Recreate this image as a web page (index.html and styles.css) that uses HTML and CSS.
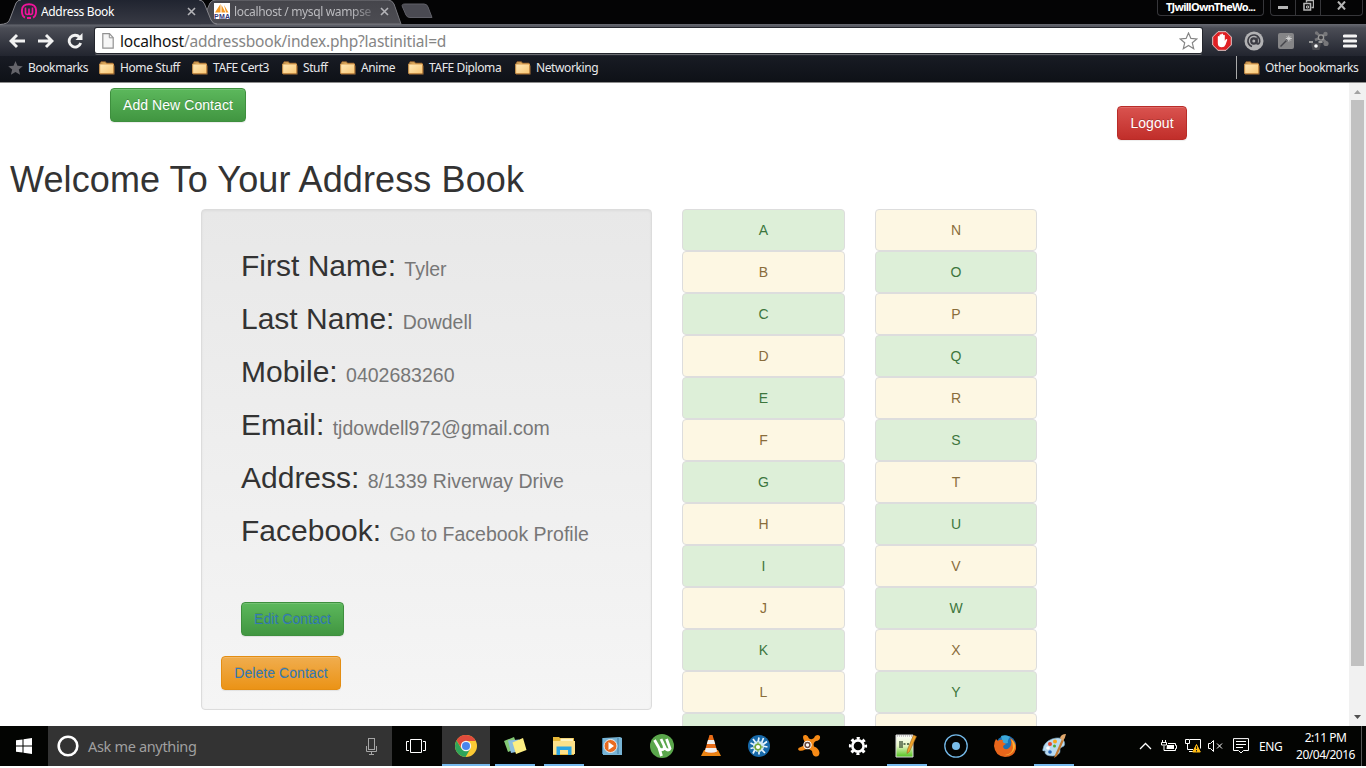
FILE: index.html
```html
<!DOCTYPE html>
<html lang="en">
<head>
<meta charset="utf-8">
<title>Address Book</title>
<link rel="stylesheet" href="styles.css">
</head>
<body>
<svg class="defs" width="0" height="0">
  <defs>
    <linearGradient id="gf" x1="0" y1="0" x2="1" y2="1"><stop offset="0" stop-color="#ffe9ba"/><stop offset="1" stop-color="#f9c774"/></linearGradient>
    <linearGradient id="gt" x1="0" y1="0" x2="0" y2="1"><stop offset="0" stop-color="#202430"/><stop offset="1" stop-color="#383a44"/></linearGradient>
    <linearGradient id="gi" x1="0" y1="0" x2="0" y2="1"><stop offset="0" stop-color="#45454b"/><stop offset="1" stop-color="#4c4c52"/></linearGradient>
    <linearGradient id="gg" x1="0" y1="0" x2="0" y2="1"><stop offset="0" stop-color="#fff"/><stop offset=".5" stop-color="#e5f6c0"/><stop offset="1" stop-color="#4fc21c"/></linearGradient>
    <symbol id="folder" viewBox="0 0 16 14"><path d="M1 2.500L2 .8h4.500l1 1.400h6.500v2" fill="#e5b363" stroke="#8a5b2d"/><path d="M.7 3h13.800v9.500H.7z" fill="url(#gf)" stroke="#d79a4d"/><path d="M1 13.300h14.300V4.500" fill="none" stroke="#74512f"/></symbol>
    <symbol id="close" viewBox="0 0 9 9"><path d="M1 1l7 7M8 1l-7 7" stroke="#b4b4b8" stroke-width="1.600"/></symbol>
  </defs>
</svg>

<header class="browser">
  <div class="tabstrip">
    <svg class="tabshapes" width="440" height="25" viewBox="0 0 440 25">
      <path d="M201 24L210 3Q212 0 216 0H388Q392 0 394 4L401 24z" fill="url(#gi)" stroke="#77777d"/>
      <path d="M402.500 7Q401 4 405 4H424Q427 4 428 7L432 17.500H410Q407 17.500 406 15z" fill="#4a4a52" stroke="#606068"/>
      <path d="M0 24.500Q8 24 9.500 20L16 3Q17.500 0 21 0H199Q203 0 204.500 4L211 20Q213 24.500 217 24.500z" fill="url(#gt)"/>
      <path d="M0 24.500Q8 24 9.500 20L16 3Q17.500 0 21 0M199 0Q203 0 204.500 4L211 20Q213 24 217 24" fill="none" stroke="#85858b"/>
    </svg>
    <div class="tab tab-active">
      <svg width="16" height="16" viewBox="0 0 16 16"><path d="M4 14.500Q.9 13.500.9 8q0-6.800 7.100-6.800T15.100 8q0 5.500-3.100 6.500M6 15h4" fill="none" stroke="#f0149a" stroke-width="1.900"/><path d="M4.500 4.500v5q0 2 1.700 2 1.800 0 1.800-2v-4 4q0 2 1.800 2 1.700 0 1.700-2v-5" fill="none" stroke="#f0149a" stroke-width="1.600"/></svg>
      <span class="tab-title">Address Book</span>
      <svg class="tab-x" width="9" height="9"><use href="#close"/></svg>
    </div>
    <div class="tab tab-idle">
      <svg width="16" height="16" viewBox="0 0 16 16"><path fill="#fff" d="M0 0h16v16H0z"/><path d="M1 9.500L6.500 1v8.500zM7.500 9.500V2l4 7.500zM10 2l4.500 7.500H12z" fill="#f49a24"/><text x="0" y="15.500" class="pma" textLength="16">PMA</text></svg>
      <span class="tab-title">localhost / mysql wampse</span>
      <svg class="tab-x" width="9" height="9"><use href="#close"/></svg>
    </div>
    <div class="user">TJwillOwnTheWo...</div>
    <div class="winctl">
      <span><svg width="10" height="10"><path fill="#b5b5b5" d="M0 5h10v3H0z"/></svg></span>
      <span><svg width="11" height="11" viewBox="0 0 11 11" fill="none" stroke="#b5b5b5"><path d="M3.500 2.500v-2h7v7h-2" stroke-width="1.400"/><path d="M1 3.500h6.500V10H1z" stroke-width="1.600"/><path d="M3.500 6h2v2h-2z"/></svg></span>
      <span><svg width="9" height="9" viewBox="0 0 9 9"><path d="M1 .5l7 8M8 .5l-7 8" stroke="#b5b5b5" stroke-width="2"/></svg></span>
    </div>
  </div>

  <div class="toolbar">
    <svg class="nav" width="16" height="16" viewBox="0 0 16 16"><path d="M8 2L2 8l6 6M2.500 8H16" fill="none" stroke="#f2f2f2" stroke-width="2.900"/></svg>
    <svg class="nav" width="16" height="16" viewBox="0 0 16 16"><path d="M8 2l6 6-6 6M13.500 8H0" fill="none" stroke="#f2f2f2" stroke-width="2.900"/></svg>
    <svg class="nav" width="16" height="16" viewBox="0 0 16 16"><path d="M12.500 4.200A5.900 5.900 0 1 0 13.700 10" fill="none" stroke="#f2f2f2" stroke-width="2.800"/><path d="M15.500 0v7H8.500z" fill="#f2f2f2"/></svg>
    <div class="omnibox">
      <svg width="12" height="16" viewBox="0 0 12 16"><path d="M.8.700h6.700l3.700 4v10.500H.8z" fill="#f6f6f6" stroke="#929292" stroke-width="1.200"/><path d="M7.300.8v4h4" fill="none" stroke="#929292"/></svg>
      <span class="url"><b>localhost</b>/addressbook/index.php?lastinitial=d</span>
      <svg class="star" width="19" height="18" viewBox="0 0 19 18"><path d="M9.500 1l2.400 5.400 5.900.5-4.500 3.900 1.400 5.900-5.200-3.200-5.200 3.200 1.400-5.900L1.200 6.900l5.900-.5z" fill="#fff" stroke="#858585" stroke-width="1.200"/></svg>
    </div>
    <div class="exts">
      <svg width="20" height="20" viewBox="0 0 20 20"><path d="M6 .7h8L19.300 6v8L14 19.300H6L.7 14V6z" fill="#df2024" stroke="#e5c9c9"/><path d="M5.800 11V5.500q.8-1 1.700 0V4q.9-1.200 1.800-.2V3q.9-1 1.800 0v1.200q.9-1 1.700 0V10l1-1.800q1.200-.7 1.500.5l-1.800 5q-1 2.600-3.700 2.600-4 0-4-4.300z" fill="#fff"/></svg>
      <svg width="20" height="20" viewBox="0 0 20 20"><circle cx="10" cy="10" r="9.500" fill="#b2b2b4"/><circle cx="9.800" cy="10" r="2.600" fill="none" stroke="#3b3b43" stroke-width="2.200"/><path d="M13 6.500v6.300q2.200.7 2.700-2.300A5.900 5.900 0 1 0 8 15.500" fill="none" stroke="#3b3b43" stroke-width="1.600"/></svg>
      <svg class="e-wand" width="16" height="16" viewBox="0 0 16 16"><rect width="16" height="16" rx="2" fill="#858587"/><path d="M2.500 13.500l7-7" stroke="#45454a" stroke-width="1.500"/><path d="M10.800 2.500v6M7.800 5.500h6M8.800 3.500l4 4M12.800 3.500l-4 4" stroke="#d7d7d7" stroke-width=".9"/></svg>
      <svg class="e-hub" width="20" height="20" viewBox="0 0 20 20"><path d="M12 6.500L8 2M12 6.500l5-4M12 6.500l5.500 5.500M12 6.500L6 9" stroke="#77777a" stroke-width="2.600"/><circle cx="16.500" cy="3" r="2.200" fill="#77777a"/><circle cx="17" cy="12.500" r="2.600" fill="#77777a"/><circle cx="7.500" cy="2" r="1.700" fill="#77777a"/><circle cx="12" cy="6.500" r="2.600" fill="#3d3d43" stroke="#999" stroke-width="1.300"/><path d="M2 12h10l-1.500 7h-7z" fill="#4b4b50"/><circle cx="7" cy="15" r="1.800" fill="#fff"/><path d="M0 11h4M9.500 11h4" stroke="#999" stroke-width="1.800"/></svg>
      <svg class="e-menu" width="14" height="14" viewBox="0 0 14 14"><path d="M1.500 2h11M1.500 7h11M1.500 12h11" stroke="#f4f4f4" stroke-width="3.200" stroke-linecap="round"/></svg>
    </div>
  </div>

  <nav class="bookmarks">
    <span class="bm b0"><svg width="15" height="14" viewBox="0 0 15 14"><path d="M7.500 0l2 4.800 5.300.4-4 3.400 1.300 5.200-4.600-2.900-4.600 2.900 1.300-5.200-4-3.400 5.300-.4z" fill="#64646a"/></svg>Bookmarks</span>
    <span class="bm b1"><svg width="16" height="14"><use href="#folder"/></svg>Home Stuff</span>
    <span class="bm b2"><svg width="16" height="14"><use href="#folder"/></svg>TAFE Cert3</span>
    <span class="bm b3"><svg width="16" height="14"><use href="#folder"/></svg>Stuff</span>
    <span class="bm b4"><svg width="16" height="14"><use href="#folder"/></svg>Anime</span>
    <span class="bm b5"><svg width="16" height="14"><use href="#folder"/></svg>TAFE Diploma</span>
    <span class="bm b6"><svg width="16" height="14"><use href="#folder"/></svg>Networking</span>
    <span class="bm other"><svg width="16" height="14"><use href="#folder"/></svg>Other bookmarks</span>
  </nav>
</header>

<main class="page">
  <div class="content">
    <div class="actions">
      <button class="btn btn-success add">Add New Contact</button>
      <button class="btn btn-danger">Logout</button>
    </div>
    <h1>Welcome To Your Address Book</h1>
    <div class="row">
      <section class="well">
        <h2>First Name: <small>Tyler</small></h2>
        <h2>Last Name: <small>Dowdell</small></h2>
        <h2>Mobile: <small>0402683260</small></h2>
        <h2>Email: <small>tjdowdell972@gmail.com</small></h2>
        <h2>Address: <small>8/1339 Riverway Drive</small></h2>
        <h2>Facebook: <small>Go to Facebook Profile</small></h2>
        <button class="btn btn-success edit">Edit Contact</button>
        <button class="btn btn-warning delete">Delete Contact</button>
      </section>
      <ul class="letters first">
        <li>A</li><li>B</li><li>C</li><li>D</li><li>E</li><li>F</li><li>G</li><li>H</li><li>I</li><li>J</li><li>K</li><li>L</li><li></li>
      </ul>
      <ul class="letters second">
        <li>N</li><li>O</li><li>P</li><li>Q</li><li>R</li><li>S</li><li>T</li><li>U</li><li>V</li><li>W</li><li>X</li><li>Y</li><li></li>
      </ul>
    </div>
  </div>
  <div class="scrollbar">
    <svg width="17" height="17"><path d="M5 11h7L8.500 7z" fill="#a3a3a3"/></svg>
    <div class="thumb"></div>
    <svg class="down" width="17" height="17"><path d="M5 6h7l-3.500 4z" fill="#505050"/></svg>
  </div>
</main>

<footer class="taskbar">
  <div class="start"><svg width="16" height="16" viewBox="0 0 16 16" fill="#fff"><path d="M0 2.300l6.500-.9v6.100H0zM7.500 1.200L16 0v7.500H7.500zM0 8.500h6.500v6.100L0 13.700zM7.500 8.500H16V16l-8.500-1.200z"/></svg></div>
  <div class="search">
    <svg width="22" height="22"><circle cx="11" cy="11" r="9.300" fill="none" stroke="#fff" stroke-width="2.600"/></svg>
    <span>Ask me anything</span>
    <svg class="mic" width="11" height="17" viewBox="0 0 11 17" fill="none" stroke="#a5a5a5"><rect x="2.500" y=".5" width="6" height="11"/><path d="M.5 8v5.500h10V8M5.500 13.500v3M3 16.500h5"/></svg>
  </div>
  <div class="taskview"><svg width="20" height="15" viewBox="0 0 20 15" fill="none" stroke="#fff"><path d="M4.500.5h11v13h-11zM3 2.500H.5v9H3M17 2.500h2.500v9H17"/></svg></div>
  <div class="apps">
    <div class="app current"><svg width="22" height="22" viewBox="0 0 22 22"><circle cx="11" cy="11" r="11" fill="#fbc934"/><path d="M1.500 5.500a11 11 0 0 1 19.200 0.500H11L6.600 13.500z" fill="#df4b3c"/><path d="M1.500 5.500a11 11 0 0 0 9 16.500l5-8.500H6.300z" fill="#2fa45a"/><circle cx="11" cy="11" r="5.200" fill="#f5f5f5"/><circle cx="11" cy="11" r="4" fill="#4a86ee"/></svg></div>
    <div class="app open"><svg width="24" height="20" viewBox="0 0 24 20"><path d="M1 5l10-4 4 11-10 4z" fill="#84c875"/><path d="M5 4.500l11-1 2 11.500-10 2z" fill="#8bbdde"/><path d="M9.500 6.500l10.500-4.500 3.500 12-10.500 4z" fill="#fdef83"/></svg></div>
    <div class="app open"><svg width="22" height="20" viewBox="0 0 22 20"><path d="M0 1h6l1 1h14v17H0z" fill="#e8b938"/><path d="M7.500 2.500H20V5H7.500z" fill="#fff3c2"/><path d="M0 5h22v13H0z" fill="#fde18a"/><path d="M3.500 19v-8.500h15V19H15v-5H7v5z" fill="#2ca5e3"/></svg></div>
    <div class="app media"><svg width="20" height="20" viewBox="0 0 20 20"><path d="M1 2l17-1 2 1v17H1z" fill="#78b4d5"/><path d="M16 2v16M.5 2v16" stroke="#3f7da5"/><circle cx="8.500" cy="10" r="6.500" fill="#e96b20" stroke="#e4edf5"/><path d="M6.500 6v8l5.500-4z" fill="#fff"/></svg></div>
    <div class="app"><svg width="24" height="24" viewBox="0 0 24 24"><circle cx="12" cy="12" r="12" fill="#5aa64b"/><path d="M4.500 6l4 7q1.500 3.500 4.500 2.500 2-1 1-4L11 5M14 11.500q1.500 4.500 4 4.500 1.500 0 2-1.500L16.500 5M9 14l2.500 8" fill="none" stroke="#fff" stroke-width="2.800"/></svg></div>
    <div class="app"><svg width="20" height="24" viewBox="0 0 20 24"><path d="M3 16h14l3 6H0z" fill="#ec8512"/><path d="M8.500 1h3l5 17q-6 3-13 0z" fill="#e86d18"/><path d="M7 6h6l1.200 4H5.800zM4.800 14h10.400l1 3.500q-6 2.500-12.400 0z" fill="#f0f0f0"/></svg></div>
    <div class="app media"><svg width="22" height="22" viewBox="0 0 22 22"><circle cx="11" cy="11" r="11" fill="#1769a9"/><path d="M11 2.500l-1 5M15.500 3l-2 5M19 6.500l-4 3M19.500 12l-5-1M17 18l-4-4M11 19.500V15M5 18.500l2-4M2.500 13.500l4-1M2.500 8l4 2M5 4l3 4" stroke="#eaf6ff" stroke-width="1.700"/><circle cx="10.500" cy="11.500" r="5.500" fill="#cfe8f6"/><circle cx="10" cy="12" r="2.800" fill="#fff" stroke="#75a83a" stroke-width="1.500"/><path d="M10 7v2.500M10 14.500V17M5 12h2.500M12.500 12H15" stroke="#75a83a"/></svg></div>
    <div class="app"><svg width="24" height="24" viewBox="0 0 24 24"><path d="M6 3q0-2.500 3-2 2 .5 3 3.500 3 1.500 5-.5 1-3 4-3 2.500.5 2 3-.5 2.500-4 3-3.500 2-2 5.500 5 1.500 5.500 6.500-.5 4-4 3.500-3-.5-3.500-5.500-3-3-7-1.500-3 2-6 1Q.5 15.500 1.500 14L6 12q1.500-1.500 1.500-4.500Q6 5.500 6 3z" fill="#f68a16"/><circle cx="10.500" cy="11" r="4.200" fill="#fff"/><circle cx="10.500" cy="11" r="2.400" fill="none" stroke="#69483b" stroke-width="1.500"/></svg></div>
    <div class="app"><svg width="20" height="20" viewBox="0 0 20 20" fill="none" stroke="#fff"><circle cx="10" cy="10" r="5.600" stroke-width="2.600"/><circle cx="10" cy="10" r="7.800" stroke-width="2.600" stroke-dasharray="3.060 3.060" stroke-dashoffset="1.530"/></svg></div>
    <div class="app open"><svg class="npp" width="22" height="24" viewBox="0 0 22 24"><path d="M1 1h17v22H1z" fill="url(#gg)" stroke="#d7d7d7"/><path d="M2 2h15" stroke="#999" stroke-dasharray="1 1"/><path d="M5 7v7M7 7v7M8.500 10h2M12 10h2" stroke="#354a30" stroke-width="1.300"/><path d="M18.500 1l3 1.500-7 15-2.500 2 .5-4z" fill="#eda32c" stroke="#976220" stroke-width=".6"/></svg></div>
    <div class="app"><svg width="24" height="24" viewBox="0 0 24 24"><circle cx="12" cy="12" r="11.200" fill="none" stroke="#74b9e8" stroke-width="1.300"/><circle cx="12" cy="12" r="4" fill="#79bde9"/></svg></div>
    <div class="app"><svg width="22" height="22" viewBox="0 0 22 22"><circle cx="12" cy="10.500" r="10" fill="#1b71b5"/><path d="M7 1q5-2 9 1-3 3-2 6l-5 1z" fill="#3ba8d9"/><path d="M2 4l2 2q2-2 5-1-1 2 1 3l2 1q-3 1-3 3 2 4 6 1 4-4 1-10 7 4 6 11-2 8-11 8Q1 21 0 11q0-4 2-7z" fill="#e8661b"/><path d="M17 4q6 5 3 11-4 6-9 5 7-1 8-7 0-5-2-9z" fill="#fbb435"/></svg></div>
    <div class="app open"><svg width="24" height="24" viewBox="0 0 24 24"><path d="M1 15q1-7 9-10 9-3 12 2 2 5-2 6-3 1-2 4 0 4-7 5-7 0-8-3 1-3-1-2-2 0-1-2z" fill="#b8daf0" stroke="#80abc7" stroke-width=".6"/><circle cx="8" cy="10" r="2" fill="#e4482f"/><circle cx="13" cy="7.500" r="2" fill="#f6a51c"/><circle cx="6" cy="14" r="1.800" fill="#fff"/><circle cx="8" cy="18" r="1.800" fill="#2563b5"/><circle cx="12.500" cy="12" r="1.500" fill="#4aaa34"/><path d="M20 5l-7 16-1 3 3-2 7-16z" fill="#c47a30"/><path d="M18 4q1-4 6-4-1 5-3 7z" fill="#dfa76c"/></svg></div>
  </div>
  <div class="tray">
    <svg class="t-up" width="13" height="8" viewBox="0 0 13 8"><path d="M1 7l5.500-5.500L12 7" fill="none" stroke="#fff" stroke-width="1.300"/></svg>
    <svg class="t-bat" width="16" height="12" viewBox="0 0 16 12" fill="none" stroke="#fff"><path d="M1.500 0v2M4.500 0v2M.5 2.500h5v2.500h-5zM3 5.500v5h11.500v-2h1v-3h-1v-2H7"/><path d="M6 5h7v4H5.500z" fill="#fff" stroke="none"/></svg>
    <svg class="t-net" width="16" height="14" viewBox="0 0 16 14" fill="none" stroke="#fff"><path d="M5 .5h10.500v9M.5.500h4v4h-4zM2.500 5v5.500H8M4 12.500h5"/><path d="M11.500 5.500L15.300 13H7.700z" fill="#fdb913" stroke="#fdb913"/><path d="M11.500 7v3M11.500 11v1.500" stroke="#222"/></svg>
    <svg class="t-vol" width="15" height="12" viewBox="0 0 15 12" fill="none" stroke="#fff"><path d="M.5 3.500h2l3-3v11l-3-3h-2zM9 3.500l5 5M14 3.500l-5 5"/></svg>
    <svg class="t-msg" width="16" height="16" viewBox="0 0 16 16" fill="none" stroke="#fff"><path d="M.5.600h15v11.900h-5L8 15l-2.500-2.500h-5zM3 3.500h10M3 6.500h10M3 9.500h7"/></svg>
    <span class="lang">ENG</span>
    <div class="clock"><span>2:11 PM</span><span class="date">20/04/2016</span></div>
    <i class="peek"></i>
  </div>
</footer>
</body>
</html>
```
FILE: styles.css
```css
* { box-sizing: border-box; }
body { margin: 0; width: 1366px; height: 768px; overflow: hidden; background: #fff; font-family: "Noto Sans", sans-serif; }
svg { display: block; flex: none; }
.defs { position: absolute; }

.browser { height: 83px; background: #10131a; border-bottom: 1px solid #8d8d8d; }
.tabstrip { position: relative; height: 24px; background: #040405; display: flex; color: #fff; }
.tabshapes { position: absolute; left: 0; top: 0; }
.tab { position: relative; display: flex; align-items: center; height: 22px; font-size: 12px; white-space: nowrap; }
.tab-active { width: 214px; padding-left: 21px; }
.tab-title { margin-left: 4px; letter-spacing: -.35px; width: 138px; overflow: hidden; }
.tab-x { margin-left: 8px; }
.tab-idle .tab-title { color: #bbbbbf; -webkit-mask-image: linear-gradient(90deg, #000 85%, rgba(0,0,0,.3)); }
.pma { font: bold 7px "Liberation Sans", sans-serif; fill: #343878; }
.user { margin-left: auto; margin-right: 6px; width: 107px; height: 16px; border: 1px solid #36363a; border-top: 0; border-radius: 0 0 4px 4px; font-size: 11px; font-weight: bold; line-height: 14px; text-align: center; letter-spacing: -.7px; white-space: nowrap; }
.winctl { display: flex; width: 93px; height: 16px; margin-right: 3px; border: 1px solid #36363a; border-top: 0; border-radius: 0 0 4px 4px; }
.winctl span { display: flex; width: 25px; justify-content: center; align-items: center; padding-bottom: 4px; border-right: 1px solid #36363a; }
.winctl span:last-child { border: 0; width: 40px; }

.toolbar { display: flex; align-items: center; height: 32px; padding: 1px 9px 0; background: linear-gradient(#686a72 0, #4b4d56 4px, #22252f 100%); }
.nav { margin-right: 13px; }
.omnibox { display: flex; align-items: center; width: 1107px; height: 25px; margin-left: -1px; padding: 0 4px 0 7px; background: #fff; border-radius: 2px; box-shadow: 0 0 0 1px #24262d, 0 2px 0 #696b70; }
.url { margin-left: 6px; font-size: 15.500px; letter-spacing: -.18px; color: #858585; white-space: nowrap; }
.url b { font-weight: normal; color: #111; }
.star { margin-left: auto; }
.exts { display: flex; align-items: center; gap: 12px; margin-left: 10px; }
.e-wand { margin-left: 2px; }
.e-hub { margin-left: 3px; }
.e-menu { margin-left: 2px; }

.bookmarks { display: flex; height: 26px; padding-left: 8px; color: #e8e8ea; font-size: 12px; letter-spacing: -.4px; background: linear-gradient(#181b24, #0e1117); }
.bm { display: flex; align-items: center; gap: 5px; height: 23px; white-space: nowrap; }
.b0 { width: 91px; }
.b1 { width: 93px; }
.b2 { width: 90px; }
.b3 { width: 58px; }
.b4 { width: 68px; }
.b5 { width: 107px; }
.other { margin-left: auto; width: 130px; padding-left: 7px; border-left: 1px solid #aaa; }

.page { display: flex; height: 643px; overflow: hidden; background: #fff; }
.content { width: 1349px; font-family: "Liberation Sans", Arial, sans-serif; font-size: 14px; color: #333; }
.actions { display: flex; justify-content: space-between; height: 57px; padding: 5px 162px 0 110px; align-items: flex-start; }
.btn { display: block; height: 34px; padding: 0; border: 1px solid; border-radius: 4px; font: 14px/20px "Liberation Sans", Arial, sans-serif; letter-spacing: .06px; text-align: center; color: #fff; text-shadow: 0 -1px 0 rgba(0,0,0,.2); box-shadow: inset 0 1px 0 rgba(255,255,255,.15), 0 1px 1px rgba(0,0,0,.075); white-space: nowrap; }
.btn-success { background: linear-gradient(#5cb85c, #419641); border-color: #3e8f3e; }
.add { width: 136px; }
.btn-danger { width: 70px; margin-top: 18px; background: linear-gradient(#d9534f, #c12e2a); border-color: #b92c28; }
.btn-warning { background: linear-gradient(#f0ad4e, #eb9316); border-color: #e38d13; }
h1, h2 { font-weight: 500; }
h1 { margin: 20px 0 10px 10px; font-size: 36px; line-height: 39px; letter-spacing: .11px; }
h2 { height: 33px; margin: 0 0 20px 20px; font-size: 30px; line-height: 33px; white-space: nowrap; }
h2 small { font-size: 19.500px; font-weight: normal; line-height: 1; color: #777; }
.row { display: flex; align-items: flex-start; padding-left: 201px; }
.well { width: 451px; height: 501px; padding: 39px 19px 19px; border: 1px solid #dcdcdc; border-radius: 4px; background: linear-gradient(#e8e8e8, #f5f5f5); box-shadow: inset 0 1px 3px rgba(0,0,0,.05), 0 1px 0 rgba(255,255,255,.1); }
.edit { width: 103px; margin: 55px 0 20px 20px; }
.delete { width: 120px; }
.edit, .delete { color: #337ab7; text-shadow: 0 -1px 0 rgba(0,0,0,.12); }
.letters { list-style: none; margin: 0 0 0 30px; padding: 0; width: 163px; text-align: center; }
.letters li { height: 42px; padding-top: 10px; line-height: 20px; border: 1px solid #ddd; border-radius: 4px; background: #fdf7e3; color: #8a6d3b; }
.first li:nth-child(odd), .second li:nth-child(even) { background: #ddefd8; color: #3c763d; }
.second { width: 162px; }
.scrollbar { display: flex; flex-direction: column; width: 17px; background: #f1f1f1; }
.thumb { width: 13px; height: 566px; margin-left: 2px; background: #c1c1c1; }
.down { margin-top: auto; }

.taskbar { display: flex; height: 40px; background: #030402; color: #fff; }
.start { width: 48px; padding: 12px 16px; }
.search { display: flex; align-items: center; width: 344px; padding: 0 15px 0 9px; background: #333; color: #a0a0a0; font-size: 14.500px; }
.search span { margin-left: 9px; letter-spacing: -.33px; }
.mic { margin-left: auto; }
.taskview { width: 50px; padding: 13px 0 0 14px; }
.apps { display: flex; gap: 1px; }
.app { display: flex; align-items: center; justify-content: center; width: 48px; height: 40px; }
.media { padding-right: 2px; }
.current { background: #343434; box-shadow: inset 0 -2px #76b9ed; }
.open { background: linear-gradient(#76b9ed, #76b9ed) center bottom / 40px 2px no-repeat; }
.npp { margin-right: 3px; }
.tray { display: flex; align-items: center; margin-left: auto; height: 40px; font-size: 12px; }
.t-bat { margin-left: 9px; }
.t-net { margin-left: 8px; }
.t-vol { margin-left: 7px; }
.t-msg { margin-left: 10px; }
.lang { margin-left: 10px; width: 23px; letter-spacing: -.4px; }
.clock { display: flex; flex-direction: column; align-items: center; width: 59px; margin-left: 14px; line-height: 17px; letter-spacing: -.5px; }
.peek { width: 5px; height: 40px; margin-left: 6px; border-left: 1px solid #555; }
```
